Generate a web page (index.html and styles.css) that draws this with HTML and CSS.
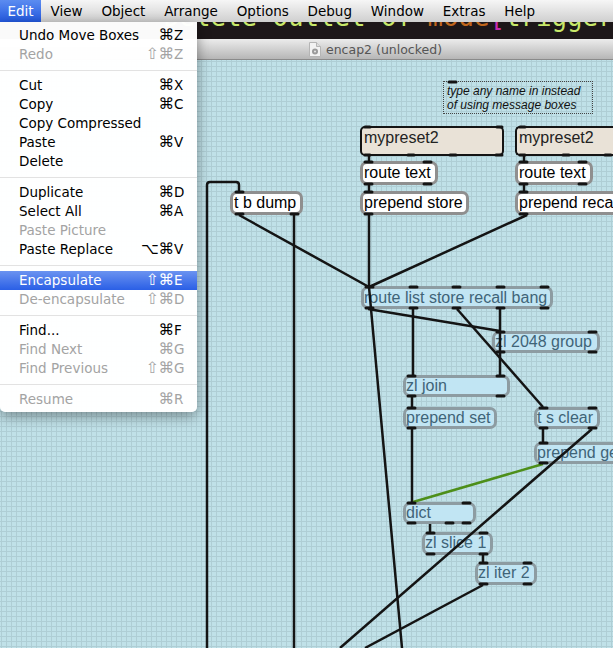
FILE: index.html
```html
<!DOCTYPE html>
<html lang="en">
<head>
    <meta charset="UTF-8">
    <meta name="viewport" content="width=device-width, initial-scale=1.0">
    <title>encap2 (unlocked)</title>
    <link rel="stylesheet" href="styles.css">
</head>
<body>

    <!-- Menu bar -->
    <nav class="menubar">
        <span class="menubar-item active">Edit</span>
        <span class="menubar-item">View</span>
        <span class="menubar-item">Object</span>
        <span class="menubar-item">Arrange</span>
        <span class="menubar-item">Options</span>
        <span class="menubar-item">Debug</span>
        <span class="menubar-item">Window</span>
        <span class="menubar-item">Extras</span>
        <span class="menubar-item">Help</span>
    </nav>

    <!-- Code window behind, only the bottom of the last line shows -->
    <div class="code-strip">
        <div class="code-line">Delete Outlet of <span class="orange">mode</span><span class="pink">[</span>trigger</div>
    </div>

    <!-- Patcher title -->
    <div class="titlebar">
        <svg class="doc-icon" width="12" height="15" viewBox="0 0 12 15">
            <path d="M.5.5h7l4 4v10H.5z" fill="#f2f2f2" stroke="#b5b5b5"/>
            <path d="M7.5.5v4h4" fill="#ddd" stroke="#b5b5b5"/>
            <circle cx="6" cy="9.5" r="3" fill="#9a9a9a"/>
            <circle cx="6" cy="9.5" r="1" fill="#e8e8e8"/>
        </svg>
        <span>encap2 (unlocked)</span>
    </div>

    <!-- Patcher canvas -->
    <main class="canvas">
        <div class="comment">type any name in instead<br>of using message boxes</div>

        <div class="box dict-box preset-1">mypreset2</div>
        <div class="box dict-box preset-2">mypreset2</div>

        <div class="box obj route-1">route text</div>
        <div class="box obj route-2">route text</div>
        <div class="box obj store">prepend store</div>
        <div class="box obj recall">prepend recall</div>
        <div class="box obj dump">t b dump</div>

        <div class="box enc route-list">route list store recall bang</div>
        <div class="box enc group">zl 2048 group</div>
        <div class="box enc join">zl join</div>
        <div class="box enc pre-set">prepend set</div>
        <div class="box enc clear">t s clear</div>
        <div class="box enc pre-get">prepend get</div>
        <div class="box enc dict">dict</div>
        <div class="box enc slice">zl slice 1</div>
        <div class="box enc iter">zl iter 2</div>

        <!-- viewBox uses page coordinates, canvas starts at y=60 -->
        <svg class="wires" width="613" height="588" viewBox="0 60 613 588">
            <g class="cords">
                <path d="M207 648V185q0-3 3-3h26q3 0 3 3v7"/>
                <path d="M294 215V648"/>
                <path d="M239 215L369 287"/>
                <path d="M369 156V161M369 185V191M369 215V287L402 648"/>
                <path d="M524 156V161M524 185V191"/>
                <path d="M527 215L369 287"/>
                <path d="M368 309L500 331"/>
                <path d="M413 309V375"/>
                <path d="M457 309L543 407"/>
                <path d="M500 309V375"/>
                <path d="M412 397V407M412 429V502"/>
                <path d="M543 429V442"/>
                <path d="M592 429L340 648"/>
                <path d="M430 524V532"/>
                <path d="M483 555V562"/>
                <path d="M483 585L365 648"/>
            </g>
            <path class="cord-green" d="M413 502L543 464"/>
            <path class="ports" d="M449 82h7
                M365 127h5M365 155h5M408 155h6M450 155h6M496 155h6M497 127h5
                M520 127h5M520 155h5M563 155h6M605 155h6
                M365 162h7M424 162h7M365 184h7M424 184h7
                M520 162h7M579 162h7M520 184h7M579 184h7
                M365 192h7M365 214h7M520 192h7M520 214h7
                M236 192h7M236 214h7M291 214h7
                M366 287h7M366 308h7M410 287h7M410 308h7M453 287h7M453 308h7M497 287h7M497 308h7M541 287h7M541 308h7
                M497 332h7M589 332h7M497 352h7M589 352h7
                M408 376h7M497 376h7M408 396h7M497 396h7
                M408 408h7M408 428h7
                M540 408h7M589 408h7M540 428h7M589 428h7
                M540 443h7M540 463h7
                M408 503h7M463 503h7M408 523h7M446 523h7M463 523h7
                M427 533h7M480 533h7M427 554h7M480 554h7
                M480 563h7M524 563h7M480 584h7M524 584h7"/>
        </svg>
    </main>

    <!-- Open Edit menu -->
    <div class="menu">
        <div class="menu-row"><span>Undo Move Boxes</span><span class="mods">⌘</span><span class="key">Z</span></div>
        <div class="menu-row off"><span>Redo</span><span class="mods">⇧⌘</span><span class="key">Z</span></div>
        <div class="menu-sep"></div>
        <div class="menu-row"><span>Cut</span><span class="mods">⌘</span><span class="key">X</span></div>
        <div class="menu-row"><span>Copy</span><span class="mods">⌘</span><span class="key">C</span></div>
        <div class="menu-row"><span>Copy Compressed</span></div>
        <div class="menu-row"><span>Paste</span><span class="mods">⌘</span><span class="key">V</span></div>
        <div class="menu-row"><span>Delete</span></div>
        <div class="menu-sep"></div>
        <div class="menu-row"><span>Duplicate</span><span class="mods">⌘</span><span class="key">D</span></div>
        <div class="menu-row"><span>Select All</span><span class="mods">⌘</span><span class="key">A</span></div>
        <div class="menu-row off"><span>Paste Picture</span></div>
        <div class="menu-row"><span>Paste Replace</span><span class="mods">⌥⌘</span><span class="key">V</span></div>
        <div class="menu-sep"></div>
        <div class="menu-row selected"><span>Encapsulate</span><span class="mods">⇧⌘</span><span class="key">E</span></div>
        <div class="menu-row off"><span>De-encapsulate</span><span class="mods">⇧⌘</span><span class="key">D</span></div>
        <div class="menu-sep"></div>
        <div class="menu-row"><span>Find...</span><span class="mods">⌘</span><span class="key">F</span></div>
        <div class="menu-row off"><span>Find Next</span><span class="mods">⌘</span><span class="key">G</span></div>
        <div class="menu-row off"><span>Find Previous</span><span class="mods">⇧⌘</span><span class="key">G</span></div>
        <div class="menu-sep"></div>
        <div class="menu-row off"><span>Resume</span><span class="mods">⌘</span><span class="key">R</span></div>
    </div>

</body>
</html>
```

FILE: styles.css
```css
html, body {
    margin: 0;
    height: 648px;
    overflow: hidden;
}
body {
    position: relative;
    display: flex;
    flex-direction: column;
    font-family: "DejaVu Sans", sans-serif;
    background: #bfe0e8;
}

/* menu bar */
.menubar {
    display: flex;
    height: 22px;
    flex: none;
    background: linear-gradient(#f6f6f6, #cfcfcf);
    font-size: 13.5px;
    line-height: 22px;
    color: #000;
}
.menubar-item {
    padding: 0 9.4px;
}
.menubar-item.active {
    color: white;
    padding: 0 7.5px;
    background: linear-gradient(#5c8cf0, #2359e0);
}

/* code strip */
.code-strip {
    height: 17px;
    flex: none;
    overflow: hidden;
    background: #1d1719;
    padding-left: 164px;
}
.code-line {
    margin-top: -28px;
    font-family: "DejaVu Sans Mono", monospace;
    font-size: 25.75px;
    line-height: 46px;
    white-space: pre;
    color: #c8e86a;
}
.orange { color: #c0661c; }
.pink { color: #c72cb0; }

/* title bar */
.titlebar {
    display: flex;
    align-items: center;
    gap: 5px;
    height: 20px;
    flex: none;
    padding-left: 309px;
    background: linear-gradient(#ececec, #b6b6b6);
    border-bottom: 1px solid #8a8a8a;
    font-size: 12.5px;
    color: #555;
}
.doc-icon {
    flex: none;
}

/* canvas */
.canvas {
    position: relative;
    flex: 1;
    overflow: hidden;
    background-color: #c0e1e8;
    background-image:
        linear-gradient(to right, #afced5 1px, transparent 1px),
        linear-gradient(to bottom, #afced5 1px, transparent 1px);
    background-size: 5px 5px;
    background-position: 1px 1px;
}
.wires {
    position: absolute;
    left: 0;
    top: 0;
}
.cords path, .cord-green {
    fill: none;
    stroke: #141414;
    stroke-width: 2.5;
}
.cord-green {
    stroke: #4d8f1a;
}
.ports {
    fill: none;
    stroke: #141414;
    stroke-width: 3;
    stroke-linecap: round;
}

.comment {
    position: absolute;
    left: 443px;
    top: 21px;
    width: 150px;
    height: 33px;
    box-sizing: border-box;
    padding: 2px 3px;
    border: 1px dotted #444;
    font-family: "Liberation Sans", Arial, sans-serif;
    font-style: italic;
    font-size: 12px;
    line-height: 14px;
    color: #111;
}

/* patcher boxes */
.box {
    position: absolute;
    box-sizing: border-box;
    display: flex;
    align-items: center;
    overflow: hidden;
    white-space: nowrap;
    font-family: "Liberation Sans", Arial, sans-serif;
    font-size: 16px;
}
.dict-box {
    top: 66px;
    height: 30px;
    padding: 0 0 6px 2px;
    background: #e9e2d7;
    border: 2px solid #141414;
    border-radius: 5px;
    color: #222;
}
.obj {
    height: 24px;
    padding: 0 0 0 1px;
    background: white;
    border: 3px solid #8f8f8f;
    border-radius: 7px;
    color: #000;
}
.enc {
    height: 22px;
    padding-bottom: 1px;
    background: #c1e5f3;
    border: 3px solid #8d9ca2;
    border-radius: 7px;
    color: #3f6478;
}

.preset-1 { left: 360px; width: 144px; }
.preset-2 { left: 515px; width: 98px; border-right: 0; border-radius: 5px 0 0 5px; }
.route-1 { left: 360px; top: 101px; width: 78px; }
.route-2 { left: 515px; top: 101px; width: 78px; }
.store { left: 360px; top: 131px; width: 109px; }
.recall { left: 515px; top: 131px; width: 98px; border-right: 0; border-radius: 7px 0 0 7px; }
.dump { left: 230px; top: 131px; width: 73px; }

.route-list { left: 361px; top: 226px; width: 192px; height: 23px; padding-bottom: 0; }
.group { left: 492px; top: 271px; width: 108px; }
.join { left: 403px; top: 315px; width: 107px; }
.pre-set { left: 403px; top: 347px; width: 94px; }
.clear { left: 534px; top: 347px; width: 66px; }
.pre-get { left: 534px; top: 382px; width: 79px; border-right: 0; border-radius: 7px 0 0 7px; }
.dict { left: 403px; top: 442px; width: 73px; }
.slice { left: 422px; top: 472px; width: 71px; height: 23px; padding-bottom: 2px; }
.iter { left: 475px; top: 502px; width: 62px; height: 23px; padding-bottom: 2px; }

/* edit menu */
.menu {
    position: absolute;
    left: 0;
    top: 22px;
    width: 197px;
    height: 390px;
    box-sizing: border-box;
    padding-top: 4px;
    background: rgba(255, 255, 255, 0.98);
    border-radius: 0 0 5px 5px;
    box-shadow: 0 4px 14px rgba(0, 0, 0, 0.4);
    font-size: 13.5px;
    color: #000;
}
.menu-row {
    display: flex;
    height: 19px;
    line-height: 19px;
    padding: 0 14px 0 19px;
}
.menu-row.off {
    color: #a3a3a3;
}
.menu-row.selected {
    color: white;
    background: linear-gradient(#6b93f0, #2a5fe6);
}
.mods {
    margin-left: auto;
    font-size: 15.5px;
}
.key {
    width: 9px;
}
.menu-sep {
    height: 1px;
    margin: 5.5px 0;
    background: #e2e2e2;
}
```
